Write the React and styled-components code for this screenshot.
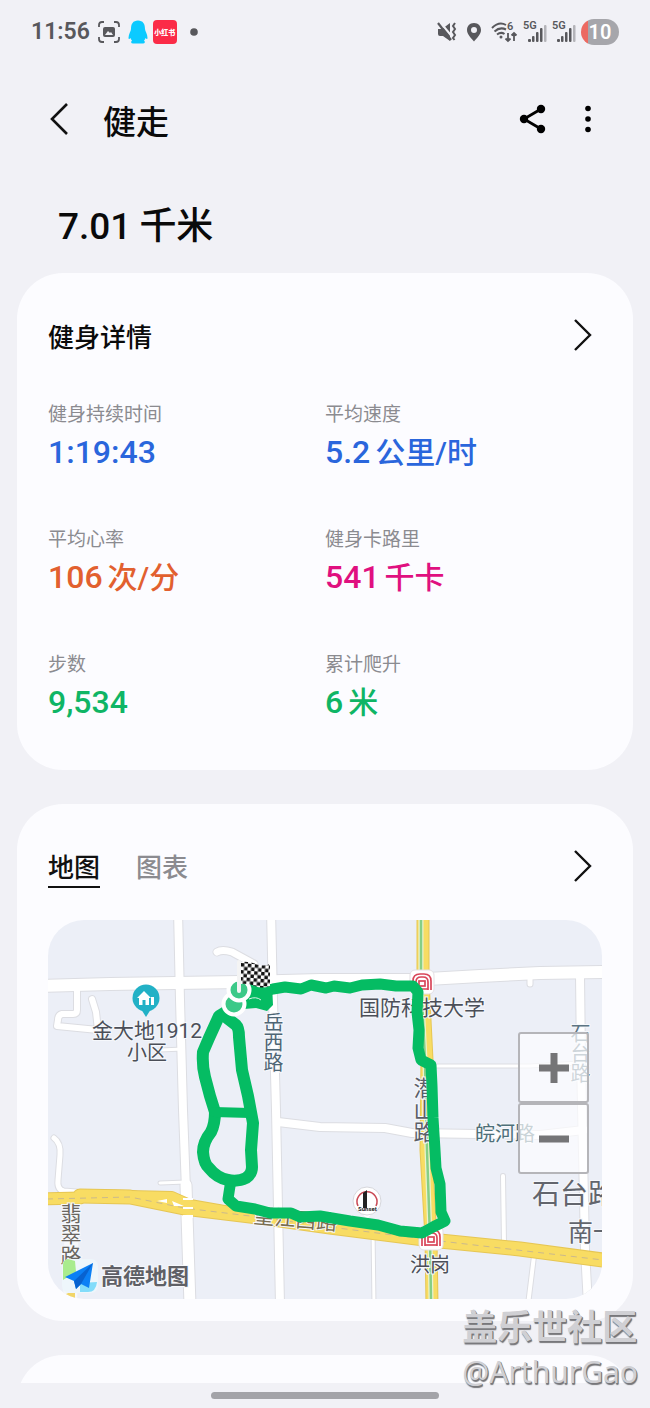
import React, { useState } from "react";
import styled, { createGlobalStyle } from "styled-components";

const stats = [
  { label: "健身持续时间", value: "1:19:43", color: "#2a66dc" },
  { label: "平均速度", value: "5.2", unit: "公里/时", color: "#2a66dc" },
  { label: "平均心率", value: "106", unit: "次/分", color: "#e2602f" },
  { label: "健身卡路里", value: "541", unit: "千卡", color: "#e0107f" },
  { label: "步数", value: "9,534", color: "#0fb565" },
  { label: "累计爬升", value: "6", unit: "米", color: "#0fb565" },
];

// [path, width]
const roads = [
  ["M40 986 L110 984 L240 982 L320 980 L410 980 L480 976 L540 973 L610 972", 12],
  ["M178 910 L180 1000 L183 1110 L186 1190", 8],
  ["M186 1185 L190 1305", 11],
  ["M271 910 L273 1000 L276 1110 L280 1305", 8],
  ["M278 1122 L320 1127 L385 1128 L412 1133 L540 1135 L584 1130", 8],
  ["M580 975 L581 1060 L584 1200 L585 1250 L588 1305", 8],
  ["M434 1066 L530 1066 L580 1063", 3],
  ["M530 976 L530 984", 5],
  ["M503 1176 L504 1244", 4],
  ["M534 1256 L528 1305", 4],
  ["M373 1230 L374 1305", 3],
  ["M77 988 L77 1010 Q77 1014 73 1014 L62 1014 Q58 1015 58 1020 L57 1026 L98 1030 L96 1012 L92 999", 6],
  ["M217 952 Q222 949 232 952 L254 964", 7],
  ["M160 1050 L183 1049", 3],
  ["M160 1183 L186 1182", 3],
  ["M54 1138 Q61 1143 60 1155 L58 1180 Q57 1190 64 1191 L76 1192", 5],
];

const yellowRoads = [
  ["M40 1199 L80 1198", 11],
  ["M80 1196 L130 1197 L184 1208 L250 1216 L330 1227 L440 1241 L520 1249 L610 1261", 13],
  ["M80 1194 L130 1195 L172 1196 L190 1204 L230 1211", 8],
  ["M423 910 L423 980 L427 1060 L426 1150 L431 1238 L432 1305", 11],
];

const routePaths = [
  "M262 992 L273 989 L285 987 L301 989 L311 985 L326 988 L334 986 L350 988 L362 985 L380 984 L396 986 L413 986 L418 992 L417 1012 L419 1030 L418 1048 L421 1060 L431 1065 L432 1086 L433 1118 L435 1150 L436 1168 L440 1184 L441 1212 L445 1221 L433 1227 L422 1233 L400 1231 L378 1225 L350 1221 L320 1216 L300 1217 L291 1213 L270 1213 L255 1209 L236 1206 L228 1199 L230 1186",
  "M232 1008 L219 1016 L209 1038 L203 1052 Q202 1066 205 1077 L210 1096 L215 1112 Q215 1124 211 1132 Q203 1142 203 1152 Q204 1164 209 1168 Q217 1178 228 1180 Q238 1182 246 1178 Q252 1174 252 1167 L251 1150 L253 1123 L248 1096 L242 1070 L239 1037 Q239 1028 236 1025 L227 1018",
];

export default function App() {
  const [tab, setTab] = useState("map");

  return (
    <>
      <GlobalStyle />
      <Page>
        <StatusBar />
        <Header>
          <IconButton aria-label="返回">
            <svg width="22" height="34" viewBox="0 0 22 34">
              <path d="M18 2 L3 17 L18 32" fill="none" stroke="#111" strokeWidth="2.6" />
            </svg>
          </IconButton>
          <Title>健走</Title>
          <HeaderActions>
            <IconButton aria-label="分享">
              <svg width="30" height="30" viewBox="0 0 30 30">
                <path d="M23 5 L6 15 L23 25" fill="none" stroke="#000" strokeWidth="2.8" />
                <circle cx="23" cy="5" r="4.2" />
                <circle cx="6" cy="15" r="4.2" />
                <circle cx="23" cy="25" r="4.2" />
              </svg>
            </IconButton>
            <IconButton aria-label="更多选项">
              <svg width="8" height="30" viewBox="0 0 8 30">
                <circle cx="4" cy="4.5" r="2.8" />
                <circle cx="4" cy="15" r="2.8" />
                <circle cx="4" cy="25.5" r="2.8" />
              </svg>
            </IconButton>
          </HeaderActions>
        </Header>

        <Distance>
          7.01 <span>千米</span>
        </Distance>

        <Cards>
          <Card $bottom={48}>
            <CardHead>
              <CardTitle>健身详情</CardTitle>
              <MoreButton label="查看健身详情" />
            </CardHead>
            <Stats>
              {stats.map((item) => (
                <div key={item.label}>
                  <StatLabel>{item.label}</StatLabel>
                  <StatValue $color={item.color}>
                    {item.value}
                    {item.unit && <StatUnit>{item.unit}</StatUnit>}
                  </StatValue>
                </div>
              ))}
            </Stats>
          </Card>

          <Card $bottom={22}>
            <CardHead>
              <Tabs role="tablist">
                <Tab role="tab" aria-selected={tab === "map"} $active={tab === "map"} onClick={() => setTab("map")}>
                  地图
                </Tab>
                <Tab role="tab" aria-selected={tab === "chart"} $active={tab === "chart"} onClick={() => setTab("chart")}>
                  图表
                </Tab>
              </Tabs>
              <MoreButton label="查看地图" />
            </CardHead>
            <MapBox>
              <RouteMap />
              <ZoomControls>
                <ZoomButton aria-label="放大">
                  <svg width="30" height="30" viewBox="0 0 30 30">
                    <path d="M15 0 V30 M0 15 H30" stroke="#757577" strokeWidth="7" />
                  </svg>
                </ZoomButton>
                <ZoomButton aria-label="缩小">
                  <svg width="30" height="30" viewBox="0 0 30 30">
                    <path d="M0 15 H30" stroke="#757577" strokeWidth="7" />
                  </svg>
                </ZoomButton>
              </ZoomControls>
            </MapBox>
          </Card>
        </Cards>

        <NextCardPeek>
          <NextCard />
        </NextCardPeek>
        <NavBar>
          <NavPill />
        </NavBar>

        <Watermark>
          <strong>盖乐世社区</strong>
          <span>@ArthurGao</span>
        </Watermark>
      </Page>
    </>
  );
}

const MoreButton = ({ label }) => (
  <IconButton aria-label={label}>
    <svg width="22" height="34" viewBox="0 0 22 34">
      <path d="M4 2 L19 17 L4 32" fill="none" stroke="#111" strokeWidth="2.4" />
    </svg>
  </IconButton>
);

const Signal = () => (
  <svg width="24" height="24" viewBox="0 0 24 24" fill="#58585c">
    <SignalText x="0" y="9">5G</SignalText>
    <rect x="5" y="19" width="3" height="3" rx="1" />
    <rect x="9" y="16" width="2.5" height="6" rx="1" />
    <rect x="13" y="12" width="2.5" height="10" rx="1" />
    <rect x="17" y="8" width="2.5" height="14" rx="1" />
    <rect x="21" y="5" width="2.5" height="17" rx="1" fill="#b4b4b9" />
  </svg>
);

const StatusBar = () => (
  <StyledStatusBar>
    <StatusGroup $gap={5}>
      <Clock>11:56</Clock>
      <svg width="28" height="24" viewBox="0 0 28 24">
        <path
          d="M4 7 V5 Q4 2 7 2 H9 M19 2 H21 Q24 2 24 5 V7 M24 17 V19 Q24 22 21 22 H19 M9 22 H7 Q4 22 4 19 V17"
          fill="none"
          stroke="#58585c"
          strokeWidth="1.8"
        />
        <rect x="8" y="7" width="12" height="10" rx="2" fill="#58585c" />
        <path d="M10 15 L13 11 L15 13 L16 12 L18 15 Z" fill="#f1f1f6" />
      </svg>
      <svg width="20" height="24" viewBox="0 0 20 24" fill="#0ccaff">
        <path d="M10 0.5 C15 0.5 17 4 17 9 C17 11 19.5 14 19.5 18 C19.5 19.5 18.5 19 17.5 18 C17 19.5 16.5 20 16 20.5 C17.5 21.5 17 23.5 15 23.5 H5 C3 23.5 2.5 21.5 4 20.5 C3.5 20 3 19.5 2.5 18 C1.5 19 0.5 19.5 0.5 18 C0.5 14 3 11 3 9 C3 4 5 0.5 10 0.5 Z" />
      </svg>
      <RedApp>小红书</RedApp>
      <svg width="24" height="24" viewBox="0 0 24 24">
        <circle cx="12" cy="12" r="3.8" fill="#58585c" />
      </svg>
    </StatusGroup>
    <StatusGroup $gap={5}>
      <svg width="20" height="24" viewBox="0 0 20 24">
        <path d="M1 9 H5 L13 3 V21 L6 16 H3 Q1 16 1 14 Z" fill="#58585c" />
        <path d="M3 2 L17 19" stroke="#f1f1f6" strokeWidth="2" />
        <path d="M1 3 L14 20" stroke="#58585c" strokeWidth="2.2" />
        <path d="M18 3 l-2 3 l2 3 l-2 3 l2 3 l-2 3 l1.500 2" fill="none" stroke="#58585c" strokeWidth="2" />
      </svg>
      <svg width="24" height="24" viewBox="0 0 24 24">
        <path
          d="M12 3 C16.500 3 19 6.300 19 10 C19 14.500 14.500 18.500 12 21.500 C9.500 18.500 5 14.500 5 10 C5 6.300 7.500 3 12 3 Z M12 7 A3 3 0 1 0 12 13 A3 3 0 1 0 12 7 Z"
          fill="#58585c"
          fillRule="evenodd"
        />
      </svg>
      <svg width="27" height="24" viewBox="0 0 27 24">
        <g fill="none" stroke="#58585c" strokeWidth="2">
          <path d="M1 8 Q8 1 15 5" />
          <path d="M3.500 11.500 Q9 6.500 15 9.500" />
          <path d="M6 14.500 Q10 11.500 13.500 14" />
          <path d="M17 13 V21 M14.500 18.500 L17 21 L19.500 18.500 M23 21 V13 M20.500 15.500 L23 13 L25.500 15.500" strokeWidth="1.800" />
        </g>
        <circle cx="10" cy="17" r="1.500" fill="#58585c" />
        <SignalText x="16" y="10">6</SignalText>
      </svg>
      <Signal />
      <Signal />
      <Battery>10</Battery>
    </StatusGroup>
  </StyledStatusBar>
);

const Roads = ({ items, color, edge }) => (
  <g fill="none" strokeLinejoin="round" strokeLinecap="round">
    {items.map(([d, width]) => (
      <path key={"edge" + d} d={d} stroke={edge} strokeWidth={width + 2} />
    ))}
    {items.map(([d, width]) => (
      <path key={d} d={d} stroke={color} strokeWidth={width} />
    ))}
  </g>
);

const Metro = ({ x, y }) => (
  <g transform={`translate(${x} ${y})`}>
    <rect x="-12" y="-12" width="24" height="24" rx="5" fill="#fff" stroke="#e3dfe3" />
    <g fill="none" stroke="#d9475a" strokeWidth="1.7">
      <path d="M-9 8 V-1 Q-9 -8 -2 -8 H2 Q9 -8 9 -1 V8" />
      <path d="M-6 8 V0 Q-6 -5 -1 -5 H1 Q6 -5 6 0 V8" />
      <rect x="-3" y="-1" width="6" height="5" />
      <path d="M-6 7 H6" />
    </g>
  </g>
);

const RouteMap = () => (
  <MapSvg viewBox="47 920 556 379" preserveAspectRatio="xMidYMid slice" role="img" aria-label="健走路线">
    <defs>
      <pattern id="checker" x="241" y="963" width="7" height="7" patternUnits="userSpaceOnUse" patternTransform="rotate(5 241 963)">
        <rect width="7" height="7" fill="#fff" />
        <rect width="3.5" height="3.5" fill="#111" />
        <rect x="3.5" y="3.5" width="3.5" height="3.5" fill="#111" />
      </pattern>
    </defs>
    <rect x="40" y="910" width="580" height="400" fill="#eceff7" />
    <Roads items={roads} color="#fff" edge="#dcdde2" />
    <path d="M72 1200 L70 1310" stroke="#f7f8fb" strokeWidth="14" />
    <Roads items={yellowRoads} color="#f8dc63" edge="#e6c654" />
    <path d="M47 1199 L130 1197 L184 1208 L250 1216 L330 1227 L440 1241 L603 1260" fill="none" stroke="#cbb98c" strokeDasharray="6 5" />
    <path d="M157 1201 L167 1199 L167 1203 Z M172 1201 L184 1206 L174 1206 Z" fill="#fff" />
    <path d="M188 1198 V1200 M188 1207 V1209 M188 1215 V1218" stroke="#fff" strokeWidth="10" />
    <path d="M421 920 L421 980 L425 1060 L427 1150 L430 1238 L431 1299" fill="none" stroke="#e9f3d0" strokeWidth="5" />
    <path d="M421 920 L421 980 L425 1060 L427 1150 L430 1238 L431 1299" fill="none" stroke="#86cf86" strokeWidth="2.5" />
    <path d="M66 1294 L75 1290 V1299 H66 Z" fill="#f1d568" />

    <path d="M146 1017 L141 1009 H151 Z" fill="#22b1c6" />
    <circle cx="146" cy="998" r="13.5" fill="#22b1c6" />
    <path d="M137 998 L144 991 L151 998 H149 V1005 H145.500 V1000 H142.500 V1005 H139 V998 Z M151 997 H154 V1005 H151 Z" fill="#fff" />
    <MapText x="147" y="1038" textAnchor="middle" $size={21}>金大地1912</MapText>
    <MapText x="147" y="1060" textAnchor="middle">小区</MapText>
    <MapText x="359" y="1015" $size={21}>国防科技大学</MapText>
    <VerticalText x="272" y="1012" $color="#4e6574">岳西路</VerticalText>
    <VerticalText x="422" y="1077" $size={22} $color="#5b5f68">潜山路</VerticalText>
    <VerticalText x="579" y="1023" $color="#5d7583">石台路</VerticalText>
    <VerticalText x="69" y="1203" $size={21} $color="#6a6661">翡翠路</VerticalText>
    <MapText x="475" y="1141" $color="#4e7079">皖河路</MapText>
    <MapText x="532" y="1204" $size={28} $color="#62656d">石台路</MapText>
    <MapText x="568" y="1241" $size={25} $color="#62656d">南一</MapText>
    <MapText x="253" y="1223" $size={21} $color="#7a6d50" transform="rotate(5 253 1223)">望江西路</MapText>

    <Metro x={422} y={982} />
    <Metro x={431} y={1238} />
    <MapText x="430" y="1272" textAnchor="middle">洪岗</MapText>

    <g>
      <path d="M367 1219 L359 1210 H375 Z" fill="#fff" />
      <circle cx="367" cy="1201" r="14" fill="#fff" stroke="#d6d7dc" />
      <path d="M358 1206 A10 10 0 1 1 376 1206" fill="none" stroke="#c94a55" strokeWidth="1.5" />
      <path d="M363 1208 V1193 L367 1190 V1208 Z" fill="#222" />
      <LogoText x="358" y="1211">Sunset</LogoText>
    </g>

    <g fill="none" stroke="#05bc63" strokeLinejoin="round" strokeLinecap="round">
      <path d={routePaths[0]} strokeWidth="11" />
      <path d={routePaths[1]} strokeWidth="12" />
      <path d="M214 1112 L250 1113" strokeWidth="10" />
    </g>
    <path d="M244 984 L272 984 L273 1005 L267 1011 L256 1008 L244 1009 Z" fill="#05bc63" />
    <path d="M249 999 Q256 996 261 1000" fill="none" stroke="#d7f3e4" />
    <circle cx="234" cy="1004" r="10.5" fill="#3cc988" stroke="#fff" strokeWidth="4" />
    <circle cx="239" cy="990" r="10.5" fill="#3cc988" stroke="#fff" strokeWidth="4" />
    <path d="M239 962 V991" stroke="#f4f4f4" strokeWidth="4" strokeLinecap="round" />
    <path d="M241 962 Q249 961 256 964 T270 964 V986 Q262 989 255 986 T241 984 Z" fill="url(#checker)" />

    <rect x="62" y="1259" width="36" height="34" rx="7" fill="#eef6fb" />
    <path d="M63 1265 Q63 1260 68 1259 L75 1261 L76 1272 L63 1280 Z" fill="#a9ec8e" />
    <path d="M80 1283 L97 1282 Q96 1292 88 1292 H80 Z" fill="#82dcfa" />
    <path d="M65 1277 L93 1263 L89 1288 L81 1284 L76 1289 L74 1281 Z" fill="#0b80f5" />
    <path d="M74 1281 L93 1263 L81 1284 L76 1289 Z" fill="#0862cf" />
    <BrandText x="101" y="1284">高德地图</BrandText>
  </MapSvg>
);

const GlobalStyle = createGlobalStyle`
  * {
    box-sizing: border-box;
  }

  body {
    margin: 0;
    background-color: #f1f1f6;
    color: #0a0a0a;
    font-family: Roboto, "Noto Sans CJK SC", sans-serif;
  }

  button {
    border: none;
    padding: 0;
    background: none;
    color: inherit;
    font: inherit;
  }

  svg {
    display: block;
  }
`;

const Page = styled.div`
  position: relative;
  display: flex;
  flex-direction: column;

  min-height: 100vh;
  overflow: hidden;
`;

const StyledStatusBar = styled.div`
  display: flex;
  justify-content: space-between;
  align-items: center;

  height: 63px;
  padding: 0 31px;
`;

const StatusGroup = styled.div`
  display: flex;
  align-items: center;
  gap: ${({ $gap }) => $gap}px;
`;

const Clock = styled.span`
  color: #58585c;
  font-size: 23px;
  font-weight: 600;
`;

const RedApp = styled.span`
  display: flex;
  align-items: center;
  justify-content: center;

  width: 24px;
  height: 24px;
  border-radius: 4px;

  background-color: #fb2b47;
  color: white;
  font-size: 7px;
  font-weight: 900;
`;

const SignalText = styled.text`
  font-size: 11px;
  font-weight: 600;
  fill: #58585c;
`;

const Battery = styled.span`
  width: 38px;
  border-radius: 13px;

  background: linear-gradient(90deg, #ec6a62 7px, #a6a6ab 7px);
  color: white;
  font-size: 20px;
  font-weight: 600;
  line-height: 26px;
  text-align: center;
`;

const Header = styled.header`
  display: flex;
  align-items: center;

  height: 112px;
  padding: 0 42px 0 40px;
`;

const IconButton = styled.button`
  display: flex;
  align-items: center;
  justify-content: center;

  width: 40px;
  height: 44px;
`;

const Title = styled.h1`
  margin: 0 0 0 23px;
  padding-top: 2px;
  font-size: 33px;
  font-weight: 500;
`;

const HeaderActions = styled.div`
  display: flex;
  gap: 15px;
  margin-left: auto;
`;

const Distance = styled.h2`
  display: flex;
  align-items: baseline;
  gap: 8px;

  height: 98px;
  margin: 0;
  padding: 25px 58px 0;

  font-size: 37px;
  font-weight: 500;
  line-height: 54px;
`;

const Cards = styled.main`
  display: flex;
  flex-direction: column;
  gap: 34px;

  padding: 0 17px;
`;

const Card = styled.section`
  padding: 40px 31px ${({ $bottom }) => $bottom}px;
  border-radius: 46px;
  background-color: #fcfcff;
`;

const CardHead = styled.div`
  display: flex;
  align-items: flex-start;
  justify-content: space-between;

  height: 46px;
`;

const CardTitle = styled.h3`
  margin: 0;
  font-size: 26px;
  font-weight: 500;
  line-height: 50px;
`;

const Stats = styled.div`
  display: grid;
  grid-template-columns: 1fr 1fr;
  row-gap: 55px;

  margin-top: 43px;
`;

const StatLabel = styled.div`
  height: 24px;

  color: #8b8b90;
  font-size: 19px;
  line-height: 26px;
`;

const StatValue = styled.div`
  display: flex;
  align-items: baseline;
  gap: 5px;

  height: 40px;
  margin-top: 6px;

  color: ${({ $color }) => $color};
  font-size: 32px;
  font-weight: 500;
  line-height: 40px;
`;

const StatUnit = styled.span`
  font-size: 30px;
`;

const Tabs = styled.div`
  display: flex;
  gap: 36px;
`;

const Tab = styled.button`
  height: 44px;
  padding-top: 6px;
  border-bottom: 2px solid ${({ $active }) => ($active ? "#111" : "transparent")};

  color: ${({ $active }) => ($active ? "#111" : "#8b8b90")};
  font-size: 26px;
  font-weight: 500;
  line-height: 36px;
`;

const MapBox = styled.div`
  position: relative;

  height: 379px;
  margin-top: 30px;
  border-radius: 36px;
  overflow: hidden;
`;

const MapSvg = styled.svg`
  width: 100%;
  height: 100%;
`;

const MapText = styled.text`
  fill: ${({ $color }) => $color || "#4b4f58"};
  stroke: #f6f8fc;
  stroke-width: 2px;
  paint-order: stroke;
  font-size: ${({ $size }) => $size || 20}px;
`;

const VerticalText = styled(MapText)`
  writing-mode: vertical-rl;
`;

const LogoText = styled.text`
  font-size: 6px;
  font-weight: 700;
  fill: #222;
`;

const BrandText = styled(MapText)`
  fill: #5f6066;
  font-size: 22px;
  font-weight: 700;
`;

// sits over the map
const ZoomControls = styled.div`
  position: absolute;
  top: 112px;
  right: 13px;

  display: flex;
  flex-direction: column;
`;

const ZoomButton = styled.button`
  display: flex;
  align-items: center;
  justify-content: center;

  width: 71px;
  height: 71px;
  border: 2px solid #b5b5b9;
  border-radius: 3px;

  background-color: rgba(253, 253, 255, 0.7);
`;

const NextCardPeek = styled.div`
  flex: 1 0 28px;
  height: 28px;
  max-height: 28px;
  margin: 34px 17px 0;
  overflow: hidden;
`;

const NextCard = styled.section`
  height: 100px;
  border-radius: 46px;
  background-color: #fcfcff;
`;

const NavBar = styled.footer`
  display: flex;
  align-items: center;
  justify-content: center;

  height: 25px;
`;

const NavPill = styled.div`
  width: 35%;
  height: 7px;
  border-radius: 4px;
  background-color: #a3a3a8;
`;

const Watermark = styled.div`
  position: absolute;
  right: 12px;
  bottom: 14px;

  display: flex;
  flex-direction: column;

  color: #d0d0d4;
  font-family: "Noto Sans", "Noto Sans CJK SC", sans-serif;
  font-size: 30px;
  line-height: 45px;
  text-shadow: 1px 1px 0 #77777b, 1px 2px 1px #77777b;

  strong {
    font-size: 35px;
    font-weight: 700;
  }
`;
